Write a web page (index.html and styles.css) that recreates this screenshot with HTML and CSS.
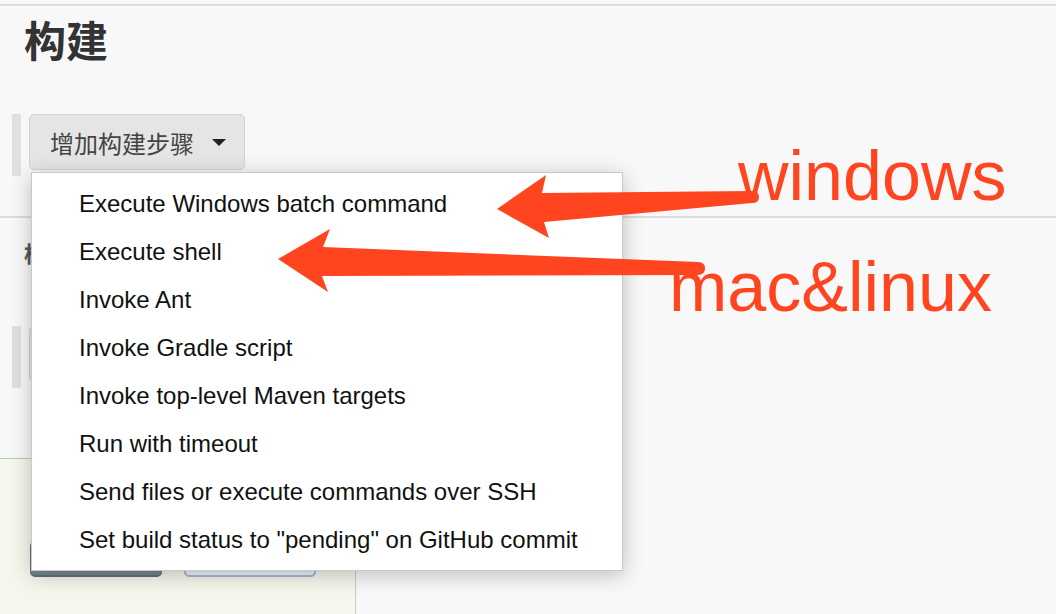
FILE: index.html
```html
<!DOCTYPE html>
<html lang="zh">
<head>
<meta charset="utf-8">
<title>构建</title>
<link rel="stylesheet" href="styles.css">
</head>
<body>
<div class="page">
  <section class="build">
    <h2 class="title">构建</h2>
    <div class="step-row">
      <span class="bar"></span>
      <button class="add-btn"><span class="add-label">增加构建步骤</span><span class="caret"></span></button>
    </div>
  </section>

  <section class="post">
    <h3 class="subtitle">构建后操作</h3>
    <div class="step-row post-row">
      <span class="bar"></span>
      <button class="add-btn wide" aria-label="增加构建后操作步骤"><span class="caret"></span></button>
    </div>
  </section>

  <div class="actions">
    <button class="btn btn-primary" aria-label="保存"></button>
    <button class="btn btn-secondary" aria-label="应用"></button>
  </div>

  <ul class="menu">
    <li>Execute Windows batch command</li>
    <li>Execute shell</li>
    <li>Invoke Ant</li>
    <li>Invoke Gradle script</li>
    <li>Invoke top-level Maven targets</li>
    <li>Run with timeout</li>
    <li>Send files or execute commands over SSH</li>
    <li>Set build status to "pending" on GitHub commit</li>
  </ul>

  <div class="note note-win">windows</div>
  <div class="note note-mac">mac&amp;linux</div>

  <svg class="arrows" width="1056" height="614" viewBox="0 0 1056 614" aria-hidden="true">
    <path d="M497 209 L546 175 L542 193 L752 191 Q759 191 759 197 Q759 203 752 203 L544 222 L549 238 Z"/>
    <path d="M278 259 L330 229 L323 247 L698 262 Q705 262 705 268.5 Q705 275 698 275 L322 276 L328 292 Z"/>
  </svg>
</div>
</body>
</html>
```

FILE: styles.css
```css
* {
  box-sizing: border-box;
}

html, body {
  margin: 0;
  padding: 0;
  background: #f8f8f8;
}

body {
  font-family: "Liberation Sans", "Noto Sans CJK SC", sans-serif;
}

.page {
  position: relative;
  width: 1056px;
  height: 614px;
  overflow: hidden;
  padding-top: 4px;
  display: flex;
  flex-direction: column;
}

.build {
  border-top: 2px solid #dcdcdc;
  padding-bottom: 40px;
}

.title {
  margin: 12px 0 0 24px;
  font-family: "Noto Sans CJK SC", sans-serif;
  font-size: 42px;
  line-height: 42px;
  font-weight: 700;
  color: #333;
}

.step-row {
  display: flex;
  align-items: flex-start;
  gap: 8px;
  margin-top: 54px;
  padding-left: 12px;
}

.bar {
  width: 9px;
  height: 62px;
  background: #e0e0e0;
  flex: none;
}

.add-btn {
  display: flex;
  align-items: center;
  gap: 18px;
  width: 216px;
  height: 56px;
  padding: 0 0 0 20px;
  border: 1px solid #d2d2d2;
  border-radius: 5px;
  background: #e5e5e5;
  font-family: "Noto Sans CJK SC", sans-serif;
  font-size: 24px;
  color: #444;
  flex: none;
}

.add-btn.wide {
  width: 300px;
  justify-content: flex-end;
  padding-right: 18px;
}

.add-label {
  white-space: nowrap;
}

.caret {
  width: 0;
  height: 0;
  border-left: 7px solid transparent;
  border-right: 7px solid transparent;
  border-top: 7px solid #222;
  flex: none;
}

.post {
  border-top: 2px solid #dcdcdc;
  padding-bottom: 70px;
}

.subtitle {
  margin: 23px 0 0 24px;
  font-family: "Noto Sans CJK SC", sans-serif;
  font-size: 22px;
  line-height: 22px;
  font-weight: 700;
  color: #555;
}

.post-row {
  margin-top: 63px;
}

.actions {
  width: 356px;
  flex: 1;
  display: flex;
  gap: 22px;
  padding: 82px 0 0 30px;
  background: #f5f6ec;
  border-top: 1px solid #a9cfbb;
  border-right: 1px solid #b9d3c5;
}

.btn {
  width: 132px;
  height: 36px;
  border-radius: 5px;
  font-family: "Noto Sans CJK SC", sans-serif;
  font-size: 18px;
}

.btn-primary {
  background: linear-gradient(#93a7b0, #72868f);
  border: 1px solid #5f7179;
  border-bottom-width: 2px;
  color: #fff;
}

.btn-secondary {
  background: #eef2f6;
  border: 2px solid #a4b9d4;
  color: #335;
}

.menu {
  position: absolute;
  left: 31px;
  top: 172px;
  width: 592px;
  height: 399px;
  margin: 0;
  padding: 7px 0 0 0;
  list-style: none;
  background: #fff;
  border: 1px solid #c9c9c9;
  box-shadow: 0 4px 20px rgba(0, 0, 0, 0.24);
  z-index: 2;
}

.menu li {
  height: 48px;
  line-height: 48px;
  padding-left: 47px;
  font-size: 24px;
  color: #111;
  white-space: nowrap;
}

.note {
  position: absolute;
  font-family: "Liberation Sans", sans-serif;
  font-size: 70px;
  line-height: 70px;
  color: #ff4420;
  white-space: nowrap;
  z-index: 3;
}

.note-win {
  left: 738px;
  top: 141px;
}

.note-mac {
  left: 669px;
  top: 252px;
}

.arrows {
  position: absolute;
  left: 0;
  top: 0;
  z-index: 4;
  pointer-events: none;
}

.arrows path {
  fill: #ff4420;
}
```
